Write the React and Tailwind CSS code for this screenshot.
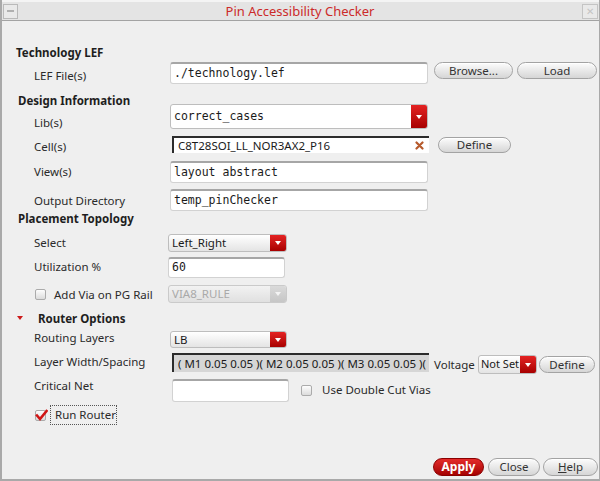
import React from "react";

const SANS = "font-['Noto_Sans',sans-serif]";
const MONO = "font-['DejaVu_Sans_Mono',monospace]";

function Label({ className = "", children }) {
  return (
    <div className={`w-[168px] shrink-0 pl-[32px] h-[16px] leading-[16px] text-[11.5px] text-[#2a2a2a] whitespace-nowrap ${className}`}>
      {children}
    </div>
  );
}

function Heading({ className = "", children }) {
  return (
    <div className={`h-[16px] leading-[16px] font-bold text-[11.5px] text-[#1e1e1e] whitespace-nowrap ${className}`}>
      {children}
    </div>
  );
}

function TextField({ className = "", mono = true, children }) {
  return (
    <div
      className={`shrink-0 bg-white rounded-[3px] border border-[#d2d2d2] border-t-2 border-t-[#a6a6a6] flex items-center pl-[3px] text-[11.5px] text-[#1a1a1a] whitespace-nowrap overflow-hidden ${mono ? MONO : ""} ${className}`}
    >
      {children}
    </div>
  );
}

function Tri({ className = "border-t-white" }) {
  return <div className={`w-0 h-0 border-l-[3px] border-r-[3px] border-t-[4px] border-l-transparent border-r-transparent ${className}`} />;
}

function Dropdown({ className = "", mono = false, bg = "bg-white", textClass = "pl-[3px] text-[11.5px]", children }) {
  return (
    <div className={`shrink-0 flex rounded-[3px] border border-[#bdbdbd] overflow-hidden ${bg} ${className}`}>
      <div className={`flex-1 flex items-center text-[#1a1a1a] whitespace-nowrap overflow-hidden ${textClass} ${mono ? MONO : ""}`}>
        {children}
      </div>
      <div className="w-[16px] shrink-0 bg-linear-to-b from-[#e42222] to-[#a80000] flex items-center justify-center">
        <Tri />
      </div>
    </div>
  );
}

function Pill({ className = "", children }) {
  return (
    <div
      className={`shrink-0 rounded-full border border-[#a3a3a3] bg-linear-to-b from-[#fcfcfc] to-[#d6d6d6] shadow-[inset_0_1px_0_#ffffff] flex items-center justify-center text-[11.5px] text-[#333] leading-none ${className}`}
    >
      {children}
    </div>
  );
}

function Check({ className = "", checked = false }) {
  return (
    <div className={`relative shrink-0 w-[11px] h-[11px] rounded-[2px] border border-[#ababab] bg-linear-to-b from-[#fdfdfd] to-[#dcdcdc] ${className}`}>
      {checked && (
        <svg className="absolute -left-[1px] -top-[2px]" width="13" height="13" viewBox="0 0 13 13">
          <path d="M2 6.5 L5 10 L11.5 2" fill="none" stroke="#d01515" strokeWidth="2.6" strokeLinecap="square" />
        </svg>
      )}
    </div>
  );
}

export default function App() {
  return (
    <div className={`w-[600px] h-[481px] bg-[#efefef] flex flex-col border-l-2 border-r border-b-2 border-[#a9a9a9] overflow-hidden ${SANS}`}>
      {/* Title bar */}
      <div className="h-[21px] shrink-0 flex items-center px-[1px] bg-[#e4e4e4] border-t-2 border-t-[#f4f4f4] border-b border-b-[#a3a3a3]">
        <div className="w-[15px] h-[15px] border border-[#b9b9b9] bg-[#e9e9e9] flex items-center justify-center">
          <div className="w-[7px] h-[2px] bg-[#b0b0b0]" />
        </div>
        <div className="flex-1 text-center text-[13px] leading-none text-[#cc2a2a]">Pin Accessibility Checker</div>
        <div className="w-[16px] h-[15px] border border-[#c4c4c4] bg-[#e9e9e9] flex items-center justify-center text-[10px] text-[#c4c4c4] leading-none">✕</div>
      </div>

      <div className="flex-1 flex flex-col">
        <Heading className="mt-[24px] pl-[14px]">Technology LEF</Heading>

        <div className="mt-[1px] h-[22px] flex items-start">
          <Label className="mt-[6px]">LEF File(s)</Label>
          <TextField className="w-[258px] h-[22px]">./technology.lef</TextField>
          <Pill className="ml-[6px] w-[79px] h-[17px]">Browse...</Pill>
          <Pill className="ml-[4px] w-[80px] h-[17px]">Load</Pill>
        </div>

        <Heading className="mt-[9px] pl-[16px]">Design Information</Heading>

        <div className="-mt-[5px] h-[25px] flex items-start">
          <Label className="mt-[11px]">Lib(s)</Label>
          <Dropdown className="w-[258px] h-[25px]" mono>correct_cases</Dropdown>
        </div>

        <div className="mt-[7px] h-[17px] flex items-start">
          <Label className="mt-[3px]">Cell(s)</Label>
          <div className="ml-[2px] w-[257px] h-[17px] shrink-0 bg-white border-t-2 border-l-2 border-[#2c2c2c] flex items-center pl-[4px] pr-[5px] text-[11.5px] text-[#1a1a1a]">
            <span className="flex-1">C8T28SOI_LL_NOR3AX2_P16</span>
            <svg width="9" height="9" viewBox="0 0 9 9">
              <path d="M1.5 1.5 L7.5 7.5 M7.5 1.5 L1.5 7.5" stroke="#b65a2c" strokeWidth="2.2" strokeLinecap="round" />
            </svg>
          </div>
          <Pill className="ml-[9px] mt-[1px] w-[73px] h-[16px]">Define</Pill>
        </div>

        <div className="mt-[8px] h-[22px] flex items-start">
          <Label className="mt-[3px]">View(s)</Label>
          <TextField className="w-[258px] h-[22px]">layout abstract</TextField>
        </div>

        <div className="mt-[6px] h-[22px] flex items-start">
          <Label className="mt-[4px]">Output Directory</Label>
          <TextField className="w-[258px] h-[22px]">temp_pinChecker</TextField>
        </div>

        <Heading className="mt-0 pl-[16px]">Placement Topology</Heading>

        <div className="mt-[7px] h-[18px] flex items-start">
          <Label className="mt-[1px]">Select</Label>
          <Dropdown className="-ml-[2px] w-[119px] h-[18px]" bg="bg-linear-to-b from-[#ffffff] to-[#e4e4e4]">Left_Right</Dropdown>
        </div>

        <div className="mt-[5px] h-[21px] flex items-start">
          <Label className="mt-[2px]">Utilization %</Label>
          <TextField className="-ml-[2px] w-[117px] h-[21px]">60</TextField>
        </div>

        <div className="mt-[7px] h-[18px] flex items-start">
          <div className="w-[168px] shrink-0 pl-[33px] flex items-start">
            <Check className="mt-[4px]" />
            <div className="ml-[8px] mt-[2px] h-[16px] leading-[16px] text-[11.5px] text-[#2a2a2a] whitespace-nowrap">Add Via on PG Rail</div>
          </div>
          <div className="-ml-[2px] w-[119px] h-[18px] shrink-0 flex rounded-[3px] border border-[#cacaca] bg-linear-to-b from-[#f2f2f2] to-[#e0e0e0] overflow-hidden">
            <div className="flex-1 flex items-center pl-[3px] text-[11.5px] text-[#a9a9a9]">VIA8_RULE</div>
            <div className="w-[16px] bg-linear-to-b from-[#dadada] to-[#c6c6c6] flex items-center justify-center">
              <Tri className="border-t-[#f4f4f4]" />
            </div>
          </div>
        </div>

        <div className="mt-[8px] h-[16px] flex items-start pl-[15px]">
          <div className="mt-[5px]">
            <Tri className="border-t-[#cc1a1a] border-l-[3.5px] border-r-[3.5px]" />
          </div>
          <Heading className="ml-[15px]">Router Options</Heading>
        </div>

        <div className="mt-[4px] h-[17px] flex items-start">
          <Label className="-mt-[1px]">Routing Layers</Label>
          <Dropdown className="w-[117px] h-[17px]" bg="bg-linear-to-b from-[#ffffff] to-[#e4e4e4]">LB</Dropdown>
        </div>

        <div className="mt-[5px] h-[21px] flex items-start">
          <Label className="mt-[1px]">Layer Width/Spacing</Label>
          <div className="ml-[2px] w-[257px] h-[19px] shrink-0 bg-[#d6d6d6] border-t-2 border-l-2 border-[#2c2c2c] flex items-center pl-[4px] text-[11.5px] text-[#1a1a1a] whitespace-nowrap overflow-hidden">
            ( M1 0.05 0.05 )( M2 0.05 0.05 )( M3 0.05 0.05 )( M4
          </div>
          <div className="ml-[5px] mt-[4px] w-[44px] shrink-0 h-[16px] leading-[16px] text-[11.5px] text-[#2a2a2a]">Voltage</div>
          <Dropdown className="mt-[2px] w-[59px] h-[19px]" bg="bg-linear-to-b from-[#ffffff] to-[#e4e4e4]" textClass="pl-[2px] text-[11px]">Not Set</Dropdown>
          <Pill className="ml-[2px] mt-[3px] w-[56px] h-[17px]">Define</Pill>
        </div>

        <div className="mt-[5px] h-[23px] flex items-start">
          <Label className="-mt-[1px]">Critical Net</Label>
          <TextField className="ml-[2px] w-[117px] h-[23px]"> </TextField>
          <Check className="ml-[12px] mt-[6px]" />
          <div className="ml-[10px] mt-[3px] h-[16px] leading-[16px] text-[11.5px] text-[#2a2a2a] whitespace-nowrap">Use Double Cut Vias</div>
        </div>

        <div className="mt-[3px] h-[20px] flex items-start pl-[33px]">
          <Check className="mt-[5px]" checked />
          <div className="ml-[4px] w-[67px] h-[20px] border border-dotted border-[#555] flex items-center pl-[4px] text-[11.5px] text-[#2a2a2a] whitespace-nowrap">Run Router</div>
        </div>

        <div className="mt-auto mb-[3px] h-[18px] flex justify-end pr-[1px]">
          <div className="w-[51px] h-[18px] rounded-full border border-[#8a0000] bg-linear-to-b from-[#e42a2a] to-[#a50000] flex items-center justify-center text-[12px] font-bold text-white leading-none">Apply</div>
          <Pill className="ml-[4px] w-[52px] h-[18px]">Close</Pill>
          <Pill className="ml-[3px] w-[55px] h-[18px]"><span className="underline">H</span>elp</Pill>
        </div>
      </div>
    </div>
  );
}
